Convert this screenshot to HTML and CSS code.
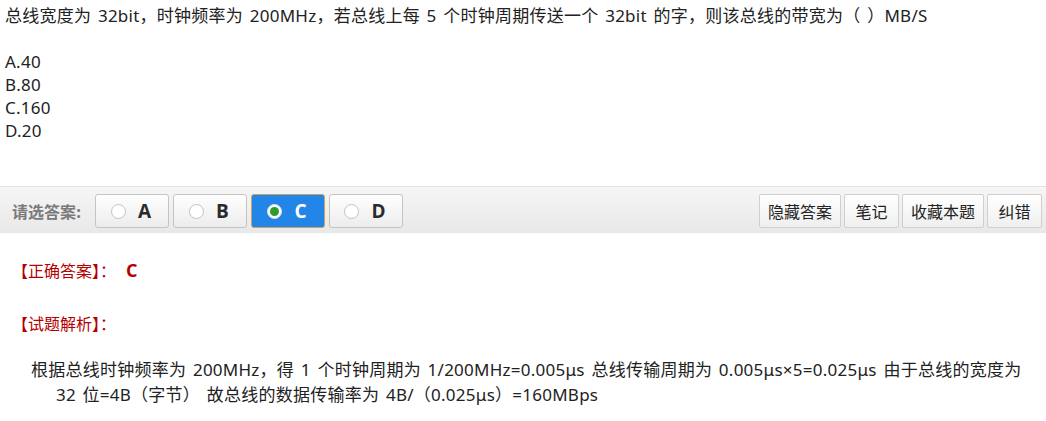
FILE: index.html
```html
<!DOCTYPE html>
<html lang="zh-CN">
<head>
<meta charset="utf-8">
<title>试题</title>
<link rel="stylesheet" href="styles.css">
</head>
<body>
<div class="question">
  <p class="stem">总线宽度为 32bit，时钟频率为 200MHz，若总线上每 5 个时钟周期传送一个 32bit 的字，则该总线的带宽为（ ）MB/S</p>
  <p class="blank">&nbsp;</p>
  <p class="opt">A.40</p>
  <p class="opt">B.80</p>
  <p class="opt">C.160</p>
  <p class="opt">D.20</p>
</div>

<div class="toolbar">
  <div class="choices">
    <span class="label">请选答案:</span>
    <button class="choice"><span class="radio"></span><span class="letter">A</span></button>
    <button class="choice"><span class="radio"></span><span class="letter">B</span></button>
    <button class="choice selected"><span class="radio"></span><span class="letter">C</span></button>
    <button class="choice"><span class="radio"></span><span class="letter">D</span></button>
  </div>
  <div class="actions">
    <button class="action">隐藏答案</button>
    <button class="action">笔记</button>
    <button class="action">收藏本题</button>
    <button class="action">纠错</button>
  </div>
</div>

<div class="answer">
  <p class="right"><span class="tag">【正确答案】：</span><span class="key">C</span></p>
  <p class="tag analysis">【试题解析】：</p>
  <p class="explain">根据总线时钟频率为 200MHz，得 1 个时钟周期为 1/200MHz=0.005μs 总线传输周期为 0.005μs×5=0.025μs 由于总线的宽度为<br>32 位=4B（字节） 故总线的数据传输率为 4B/（0.025μs）=160MBps</p>
</div>
</body>
</html>
```

FILE: styles.css
```css
html, body {
  margin: 0;
  padding: 0;
  background: #fff;
}

body {
  font-family: "Noto Sans", "Noto Sans CJK SC", sans-serif;
  color: #222;
  font-size: 17px;
}

p {
  margin: 0;
}

.question {
  padding: 4px 6px 0 5px;
  line-height: 23px;
  word-spacing: 2px;
  letter-spacing: 0.25px;
}

.toolbar {
  margin-top: 44px;
  height: 47px;
  box-sizing: border-box;
  padding: 7px 4px 0 12px;
  border-top: 1px solid #e2e2e2;
  background: linear-gradient(#f6f6f6, #e8e8e8);
  display: flex;
  justify-content: space-between;
  align-items: flex-start;
}

.choices {
  display: flex;
  align-items: center;
  gap: 4px;
}

.label {
  font-family: "Noto Sans CJK SC", sans-serif;
  font-size: 16px;
  font-weight: bold;
  color: #7a7a7a;
  width: 79px;
}

.choice {
  width: 74px;
  height: 34px;
  box-sizing: border-box;
  border: 1px solid #c4c4c4;
  border-radius: 3px;
  background: linear-gradient(#ffffff, #ececec);
  display: flex;
  align-items: center;
  justify-content: center;
  gap: 12px;
  padding: 0 2px 0 0;
  font-family: "Open Sans", "Noto Sans", sans-serif;
}

.radio {
  width: 15px;
  height: 15px;
  box-sizing: border-box;
  border-radius: 50%;
  border: 1px solid #c2c2c2;
  background: #fff;
  display: flex;
  align-items: center;
  justify-content: center;
}

.letter {
  font-size: 19px;
  font-weight: bold;
  color: #2b2b2b;
  line-height: 1;
}

.choice.selected {
  background: #2186e8;
  border-color: #c9a25e;
}

.choice.selected .radio {
  border-color: #e0e0e0;
}

.choice.selected .radio::after {
  content: "";
  width: 9px;
  height: 9px;
  border-radius: 50%;
  background: #2c9a2c;
}

.choice.selected .letter {
  color: #fff;
}

.actions {
  display: flex;
  gap: 3px;
}

.action {
  height: 34px;
  min-width: 55px;
  box-sizing: border-box;
  padding: 0 8px;
  border: 1px solid #cfcfcf;
  border-radius: 2px;
  background: linear-gradient(#ffffff, #efefef);
  font-family: "Noto Sans CJK SC", sans-serif;
  font-size: 16px;
  color: #222;
}

.answer {
  padding: 25px 0 0 12px;
}

.right {
  line-height: 24px;
  display: flex;
  align-items: center;
}

.tag {
  color: #b40000;
  font-family: "Noto Sans CJK SC", sans-serif;
  font-size: 16px;
  line-height: 24px;
}

.key {
  color: #b40000;
  font-weight: bold;
  font-size: 18px;
  font-family: "Open Sans", sans-serif;
  margin-left: 10px;
}

.analysis {
  margin-top: 29px;
}

.explain {
  margin-top: 22px;
  padding-left: 44px;
  text-indent: -25px;
  line-height: 25px;
  word-spacing: 2px;
  letter-spacing: 0.25px;
  color: #222;
}
```
